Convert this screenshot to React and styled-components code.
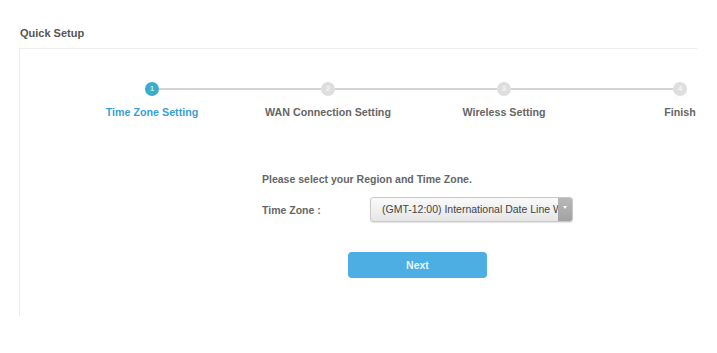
import styled, { createGlobalStyle } from "styled-components";

const GlobalStyle = createGlobalStyle`
  html, body {
    margin: 0;
    padding: 0;
    background: #fff;
    overflow: hidden;
  }
  body {
    font-family: "Liberation Sans", Arial, sans-serif;
  }
`;

const Page = styled.div`
  width: 717px;
  height: 353px;
  padding: 26px 20px 0 19px;
  box-sizing: border-box;
`;

const Title = styled.h1`
  margin: 0 0 8px 1px;
  font-size: 11px;
  line-height: 14px;
  font-weight: 700;
  color: #555;
`;

const Panel = styled.div`
  height: 268px;
  border-top: 1px solid #ececec;
  border-left: 1px solid #ececec;
  overflow: hidden;
  padding-top: 33px;
  box-sizing: border-box;
`;

const Stepper = styled.div`
  display: flex;
  padding-left: 44px;
`;

const Step = styled.div`
  position: relative;
  flex: 0 0 176px;
  display: flex;
  flex-direction: column;
  align-items: center;

  &::after {
    content: "";
    display: ${(p) => (p.$last ? "none" : "block")};
    position: absolute;
    top: 6px;
    left: calc(50% + 7px);
    width: 162px;
    height: 2px;
    background: #d4d4d4;
  }
`;

const Dot = styled.div`
  width: 14px;
  height: 14px;
  border-radius: 50%;
  background: ${(p) => (p.$active ? "#3aaec8" : "#dedede")};
  color: ${(p) => (p.$active ? "#bfe8f0" : "#f4f4f4")};
  font-size: 8px;
  font-weight: 700;
  line-height: 14px;
  text-align: center;
`;

const StepLabel = styled.div`
  margin-top: 10px;
  font-size: 10.7px;
  line-height: 13px;
  font-weight: 700;
  white-space: nowrap;
  color: ${(p) => (p.$active ? "#3a9fd8" : "#666")};
`;

const Form = styled.div`
  margin: 54px 0 0 242px;
  display: flex;
  flex-direction: column;
`;

const Prompt = styled.div`
  font-size: 10.5px;
  line-height: 13px;
  font-weight: 700;
  color: #666;
`;

const Row = styled.div`
  display: flex;
  align-items: center;
  margin-top: 11px;
`;

const FieldLabel = styled.div`
  width: 108px;
  font-size: 10.5px;
  font-weight: 700;
  color: #666;
`;

const Select = styled.div`
  width: 203px;
  height: 25px;
  box-sizing: border-box;
  display: flex;
  border: 1px solid #c8c8c8;
  border-radius: 3px;
  overflow: hidden;
  background: linear-gradient(#fafafa, #e6e6e6);
  box-shadow: 0 1px 1px rgba(0, 0, 0, 0.1);
`;

const SelectText = styled.div`
  flex: 1;
  min-width: 0;
  padding-left: 11px;
  font-size: 10.5px;
  line-height: 23px;
  color: #444;
  white-space: nowrap;
  overflow: hidden;
`;

const Arrow = styled.div`
  flex: 0 0 14px;
  background: linear-gradient(#b8b8b8, #a2a2a2);
  display: flex;
  align-items: center;
  justify-content: center;

  &::before {
    content: "";
    border-left: 2px solid transparent;
    border-right: 2px solid transparent;
    border-top: 3px solid #fff;
    margin-top: -4px;
  }
`;

const NextButton = styled.button`
  margin: 30px 0 0 86px;
  width: 139px;
  height: 26px;
  border: none;
  border-radius: 4px;
  background: #4caee2;
  color: #e8f5fc;
  font-family: "Liberation Sans", Arial, sans-serif;
  font-size: 10.5px;
  font-weight: 700;
  cursor: pointer;
`;

const steps = ["Time Zone Setting", "WAN Connection Setting", "Wireless Setting", "Finish"];

export default function App() {
  return (
    <Page>
      <GlobalStyle />
      <Title>Quick Setup</Title>
      <Panel>
        <Stepper>
          {steps.map((s, i) => (
            <Step key={s} $last={i === steps.length - 1}>
              <Dot $active={i === 0}>{i + 1}</Dot>
              <StepLabel $active={i === 0}>{s}</StepLabel>
            </Step>
          ))}
        </Stepper>
        <Form>
          <Prompt>Please select your Region and Time Zone.</Prompt>
          <Row>
            <FieldLabel>Time Zone :</FieldLabel>
            <Select>
              <SelectText>(GMT-12:00) International Date Line West</SelectText>
              <Arrow />
            </Select>
          </Row>
          <NextButton>Next</NextButton>
        </Form>
      </Panel>
    </Page>
  );
}
